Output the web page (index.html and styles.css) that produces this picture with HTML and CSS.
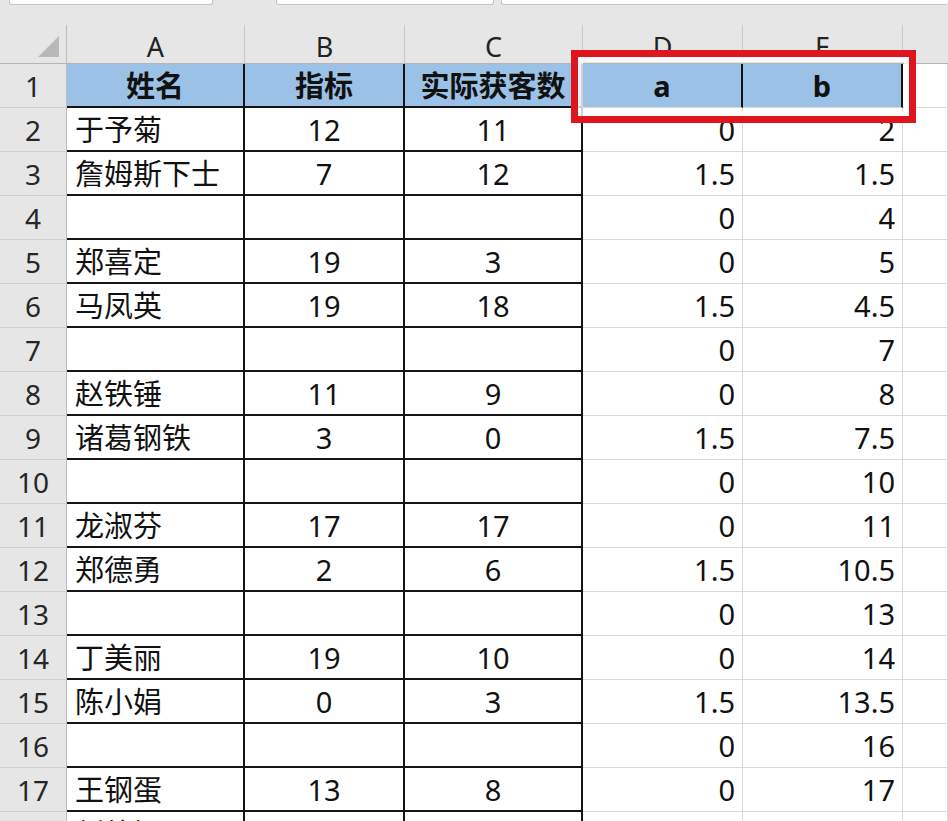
FILE: index.html
```html
<!DOCTYPE html>
<html lang="zh">
<head>
<meta charset="utf-8">
<title>Sheet</title>
<link rel="stylesheet" href="styles.css">
</head>
<body>
<div class="app">
  <div class="toolbar">
    <div class="field f1"></div>
    <div class="field f2"></div>
    <div class="field f3"></div>
  </div>
  <div class="sheet">
    <div class="grid">
      <div class="corner"><svg width="67" height="39" viewBox="0 0 67 39"><polygon points="38,32 59,11 59,32" fill="#b8b8b8"/></svg></div>
      <div class="ch">A</div><div class="ch">B</div><div class="ch">C</div><div class="ch">D</div><div class="ch">E</div><div class="ch last"></div>

      <div class="rh">1</div>
      <div class="c bk hd">姓名</div><div class="c bk hd">指标</div><div class="c bk hd">实际获客数</div>
      <div class="c hdx">a</div><div class="c hdx">b</div><div class="c"></div>

      <div class="rh">2</div>
      <div class="c bk nm">于予菊</div><div class="c bk ct">12</div><div class="c bk ct">11</div>
      <div class="c rt">0</div><div class="c rt">2</div><div class="c"></div>

      <div class="rh">3</div>
      <div class="c bk nm">詹姆斯下士</div><div class="c bk ct">7</div><div class="c bk ct">12</div>
      <div class="c rt">1.5</div><div class="c rt">1.5</div><div class="c"></div>

      <div class="rh">4</div>
      <div class="c bk nm"></div><div class="c bk ct"></div><div class="c bk ct"></div>
      <div class="c rt">0</div><div class="c rt">4</div><div class="c"></div>

      <div class="rh">5</div>
      <div class="c bk nm">郑喜定</div><div class="c bk ct">19</div><div class="c bk ct">3</div>
      <div class="c rt">0</div><div class="c rt">5</div><div class="c"></div>

      <div class="rh">6</div>
      <div class="c bk nm">马凤英</div><div class="c bk ct">19</div><div class="c bk ct">18</div>
      <div class="c rt">1.5</div><div class="c rt">4.5</div><div class="c"></div>

      <div class="rh">7</div>
      <div class="c bk nm"></div><div class="c bk ct"></div><div class="c bk ct"></div>
      <div class="c rt">0</div><div class="c rt">7</div><div class="c"></div>

      <div class="rh">8</div>
      <div class="c bk nm">赵铁锤</div><div class="c bk ct">11</div><div class="c bk ct">9</div>
      <div class="c rt">0</div><div class="c rt">8</div><div class="c"></div>

      <div class="rh">9</div>
      <div class="c bk nm">诸葛钢铁</div><div class="c bk ct">3</div><div class="c bk ct">0</div>
      <div class="c rt">1.5</div><div class="c rt">7.5</div><div class="c"></div>

      <div class="rh">10</div>
      <div class="c bk nm"></div><div class="c bk ct"></div><div class="c bk ct"></div>
      <div class="c rt">0</div><div class="c rt">10</div><div class="c"></div>

      <div class="rh">11</div>
      <div class="c bk nm">龙淑芬</div><div class="c bk ct">17</div><div class="c bk ct">17</div>
      <div class="c rt">0</div><div class="c rt">11</div><div class="c"></div>

      <div class="rh">12</div>
      <div class="c bk nm">郑德勇</div><div class="c bk ct">2</div><div class="c bk ct">6</div>
      <div class="c rt">1.5</div><div class="c rt">10.5</div><div class="c"></div>

      <div class="rh">13</div>
      <div class="c bk nm"></div><div class="c bk ct"></div><div class="c bk ct"></div>
      <div class="c rt">0</div><div class="c rt">13</div><div class="c"></div>

      <div class="rh">14</div>
      <div class="c bk nm">丁美丽</div><div class="c bk ct">19</div><div class="c bk ct">10</div>
      <div class="c rt">0</div><div class="c rt">14</div><div class="c"></div>

      <div class="rh">15</div>
      <div class="c bk nm">陈小娟</div><div class="c bk ct">0</div><div class="c bk ct">3</div>
      <div class="c rt">1.5</div><div class="c rt">13.5</div><div class="c"></div>

      <div class="rh">16</div>
      <div class="c bk nm"></div><div class="c bk ct"></div><div class="c bk ct"></div>
      <div class="c rt">0</div><div class="c rt">16</div><div class="c"></div>

      <div class="rh">17</div>
      <div class="c bk nm">王钢蛋</div><div class="c bk ct">13</div><div class="c bk ct">8</div>
      <div class="c rt">0</div><div class="c rt">17</div><div class="c"></div>

      <div class="rh">18</div>
      <div class="c bk nm">刘德福</div><div class="c bk ct">15</div><div class="c bk ct">14</div>
      <div class="c rt">1.5</div><div class="c rt">16.5</div><div class="c"></div>
    </div>
    <div class="highlight"></div>
  </div>
</div>
</body>
</html>
```

FILE: styles.css
```css
html, body {
  margin: 0;
  padding: 0;
  overflow: hidden;
  background: #e6e6e6;
}

.app {
  width: 948px;
  height: 821px;
  overflow: hidden;
  font-family: "Noto Sans", "Noto Sans CJK SC", sans-serif;
  color: #111;
}

.toolbar {
  height: 25px;
  display: flex;
  align-items: flex-start;
}

.field {
  height: 4px;
  background: #fff;
  border: 1px solid #c4c4c4;
  border-top: none;
  border-radius: 0 0 3px 3px;
}

.f1 { margin-left: 9px; width: 202px; }
.f2 { margin-left: 63px; width: 216px; }
.f3 { margin-left: 7px; flex: 1; border-right: none; }

.sheet {
  position: relative;
}

.grid {
  display: grid;
  grid-template-columns: 67px 178px 160px 178px 160px 160px 1fr;
  grid-template-rows: 39px repeat(18, 44px);
}

.grid > div {
  box-sizing: border-box;
}

.corner {
  background: #e6e6e6;
  border-right: 1px solid #bdbdbd;
  border-bottom: 1px solid #b5b5b5;
}

.corner svg { display: block; }

.ch {
  background: #e6e6e6;
  border-right: 1px solid #c8c8c8;
  border-bottom: 1px solid #b5b5b5;
  text-align: center;
  font-size: 27px;
  line-height: 28px;
  padding-top: 8px;
  color: #222;
}

.ch.last { border-right: none; }

.rh {
  background: #e6e6e6;
  border-right: 1px solid #bdbdbd;
  border-bottom: 1px solid #cdcdcd;
  text-align: center;
  font-size: 28px;
  line-height: 44px;
  color: #262626;
}

.c {
  background: #fff;
  border-right: 1px solid #d9d9d9;
  border-bottom: 1px solid #d9d9d9;
  font-size: 29px;
  line-height: 43px;
  white-space: nowrap;
  overflow: hidden;
}

.bk {
  border-right: 2px solid #141414;
  border-bottom: 2px solid #141414;
}

.nm { padding-left: 8px; text-align: left; }
.ct { text-align: center; }
.rt { text-align: right; padding-right: 7px; }

.hd {
  background: #9bc2e6;
  font-weight: bold;
  text-align: center;
}

.hdx {
  background: #9bc2e6;
  border-right: 2px solid #141414;
  font-weight: bold;
  text-align: center;
}

.highlight {
  position: absolute;
  left: 571px;
  top: 25px;
  width: 345px;
  height: 73px;
  box-sizing: border-box;
  border: 7px solid #e0161e;
  box-shadow: inset 0 0 0 5px rgba(255, 255, 255, 0.8);
}
```
